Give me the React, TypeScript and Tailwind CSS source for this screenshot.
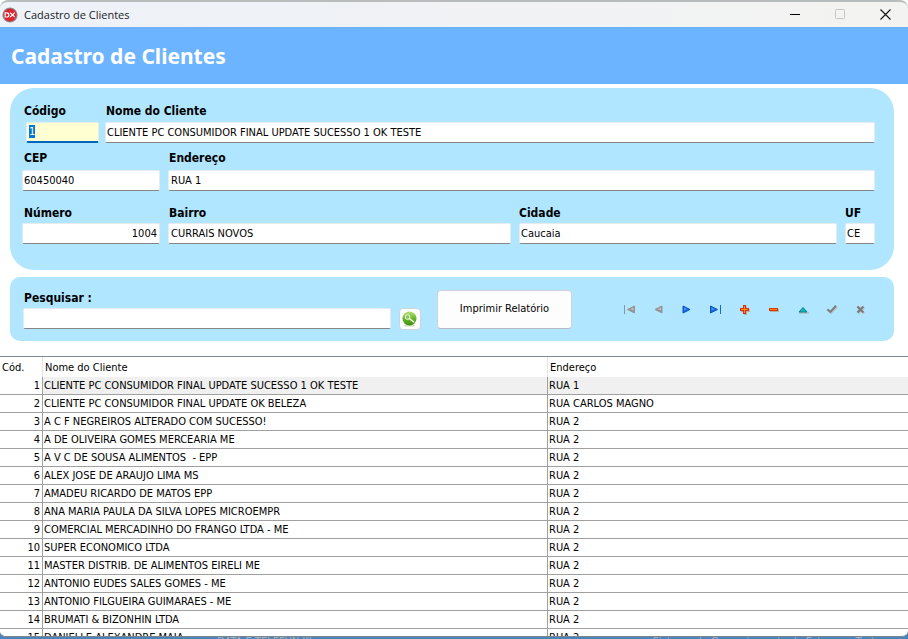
import { useEffect, useRef, type ReactNode, type Ref } from 'react';

const clients: { code: number; name: string; address: string }[] = [
  { code: 1, name: 'CLIENTE PC CONSUMIDOR FINAL UPDATE SUCESSO 1 OK TESTE', address: 'RUA 1' },
  { code: 2, name: 'CLIENTE PC CONSUMIDOR FINAL UPDATE OK BELEZA', address: 'RUA CARLOS MAGNO' },
  { code: 3, name: 'A C F NEGREIROS ALTERADO COM SUCESSO!', address: 'RUA 2' },
  { code: 4, name: 'A DE OLIVEIRA GOMES MERCEARIA ME', address: 'RUA 2' },
  { code: 5, name: 'A V C DE SOUSA ALIMENTOS  - EPP', address: 'RUA 2' },
  { code: 6, name: 'ALEX JOSE DE ARAUJO LIMA MS', address: 'RUA 2' },
  { code: 7, name: 'AMADEU RICARDO DE MATOS EPP', address: 'RUA 2' },
  { code: 8, name: 'ANA MARIA PAULA DA SILVA LOPES MICROEMPR', address: 'RUA 2' },
  { code: 9, name: 'COMERCIAL MERCADINHO DO FRANGO LTDA - ME', address: 'RUA 2' },
  { code: 10, name: 'SUPER ECONOMICO LTDA', address: 'RUA 2' },
  { code: 11, name: 'MASTER DISTRIB. DE ALIMENTOS EIRELI ME', address: 'RUA 2' },
  { code: 12, name: 'ANTONIO EUDES SALES GOMES - ME', address: 'RUA 2' },
  { code: 13, name: 'ANTONIO FILGUEIRA GUIMARAES - ME', address: 'RUA 2' },
  { code: 14, name: 'BRUMATI & BIZONHIN LTDA', address: 'RUA 2' },
  { code: 15, name: 'DANIELLE ALEXANDRE MAIA', address: 'RUA 2' },
];

const inputBase =
  'h-[21px] min-w-0 rounded-[2px] border border-[#e6ebee] px-px pb-px text-[11px] leading-[14px] text-black outline-none selection:bg-[#0078d7] selection:text-white';

function Field({
  id,
  label,
  value,
  className = '',
  labelClass = '',
  inputClass = 'bg-white border-b-[#868686]',
  inputRef,
}: {
  id: string;
  label: string;
  value: string;
  className?: string;
  labelClass?: string;
  inputClass?: string;
  inputRef?: Ref<HTMLInputElement>;
}) {
  return (
    <div className={`flex min-w-0 flex-col ${className}`}>
      <label htmlFor={id} className={`text-[12px] font-bold leading-4 ${labelClass}`}>
        {label}
      </label>
      <input ref={inputRef} id={id} type="text" defaultValue={value} className={`${inputBase} ${inputClass}`} />
    </div>
  );
}

function Triangle({ flip, bar, blue }: { flip?: boolean; bar?: boolean; blue?: boolean }) {
  const main = blue ? '#1668e0' : '#949494';
  const edge = blue ? '#0a52c8' : '#949494';
  const light = blue ? '#4c96f4' : '#c4c4c4';
  return (
    <g transform={flip ? 'translate(14 0) scale(-1 1)' : undefined}>
      <path d={bar ? 'M1.5 3v7L8.5 6.5z' : 'M3 3v7L10 6.5z'} fill={main} stroke={edge} strokeWidth="1" />
      <path d={bar ? 'M2.5 4.6v2.6L5.8 6.2z' : 'M4 4.6v2.6L7.3 6.2z'} fill={light} />
      {bar && <path d="M11 2h1v9h-1z" fill={main} />}
    </g>
  );
}

const navItems: { label: string; icon: ReactNode }[] = [
  { label: 'Primeiro', icon: <Triangle flip bar /> },
  { label: 'Anterior', icon: <Triangle flip /> },
  { label: 'Próximo', icon: <Triangle blue /> },
  { label: 'Último', icon: <Triangle bar blue /> },
  {
    label: 'Inserir',
    icon: (
      <>
        <path d="M6 3h3v3h3v3H9v3H6V9H3V6h3z" fill="#b4b0a8" />
        <path d="M5 2h3v3h3v3H8v3H5V8H2V5h3z" fill="#d83208" />
        <path d="M6 3h1v3h3v1H7v3H6V7H3V6h3z" fill="#ff8a1c" />
      </>
    ),
  },
  {
    label: 'Excluir',
    icon: (
      <>
        <path d="M3 6h9v3H3z" fill="#b4b0a8" />
        <path d="M2 5h9v3H2z" fill="#d83a08" />
        <path d="M3 6h7v1H3z" fill="#ff7a14" />
      </>
    ),
  },
  {
    label: 'Editar',
    icon: (
      <>
        <path d="M3 9.4h10v1.2H3z" fill="#b4b0a8" />
        <path d="M7 4.5L11 9H3z" fill="#12b8c0" stroke="#087c88" strokeWidth="1" />
      </>
    ),
  },
  {
    label: 'Gravar',
    icon: (
      <>
        <path d="M3 7.4L6 10l6-6" fill="none" stroke="#bfbfbf" strokeWidth="2" />
        <path d="M2.4 6.2L5.4 8.9L11 2.8" fill="none" stroke="#7c7c7c" strokeWidth="2" />
      </>
    ),
  },
  {
    label: 'Cancelar',
    icon: (
      <>
        <path d="M4.2 4.2l6 6.2M10.2 4.2l-6 6.2" stroke="#c4c0bc" strokeWidth="2.2" />
        <path d="M3.4 3.4l6 6.2M9.4 3.4l-6 6.2" stroke="#7c7c7c" strokeWidth="2.2" />
      </>
    ),
  },
];

function TitleBar() {
  return (
    <header className="flex h-[27px] shrink-0 items-stretch justify-between rounded-t-lg border-t-2 border-[#b9bcbc] bg-linear-to-r from-[#eef2f9] to-[#f3f3f1]">
      <div className="flex items-center gap-[6px] pl-[2px]">
        <svg width="16" height="16" viewBox="0 0 16 16" aria-hidden="true">
          <circle cx="8" cy="8" r="7.6" fill="#8f8f94" />
          <circle cx="8" cy="8" r="6.5" fill="#dc2632" />
          <path
            d="M3.2 5.8h1.6a2 2 0 010 4.2H3.2zM8.2 5.6l4.6 4.6M12.8 5.6l-4.6 4.6"
            fill="none"
            stroke="#fff"
            strokeWidth="1.2"
          />
        </svg>
        <span className="font-['Open_Sans',sans-serif] text-[11px] leading-4 text-[#1b1b1b]">Cadastro de Clientes</span>
      </div>
      <div className="flex">
        <button type="button" aria-label="Minimizar" className="grid w-[45px] place-items-center">
          <svg width="11" height="11" viewBox="0 0 11 11">
            <path d="M0 5.5h10" stroke="#000" />
          </svg>
        </button>
        <button type="button" aria-label="Maximizar" disabled className="grid w-[45px] place-items-center">
          <svg width="11" height="11" viewBox="0 0 11 11">
            <rect x=".5" y=".5" width="9" height="9" rx="1" fill="none" stroke="#c6c6c6" />
          </svg>
        </button>
        <button type="button" aria-label="Fechar" className="grid w-[45px] place-items-center">
          <svg width="11" height="11" viewBox="0 0 11 11">
            <path d="M.5 .5l10 10M10.5 .5l-10 10" stroke="#111" strokeWidth="1.1" />
          </svg>
        </button>
      </div>
    </header>
  );
}

export default function App() {
  const codeRef = useRef<HTMLInputElement>(null);

  useEffect(() => {
    codeRef.current?.focus();
    codeRef.current?.select();
  }, []);

  return (
    <div className="flex h-screen flex-col overflow-hidden bg-[#4a84b8] font-['DejaVu_Sans_Condensed','DejaVu_Sans',sans-serif] text-[11px] text-black">
      <div className="flex min-h-0 flex-1 flex-col overflow-hidden rounded-b-md border-b border-[#7d8790] bg-white">
        <TitleBar />
        <div className="flex h-[57px] shrink-0 items-center bg-[#6cb4ff] px-[11px]">
          <h1 className="font-['Noto_Sans',sans-serif] text-[21px] font-bold leading-7 text-white">Cadastro de Clientes</h1>
        </div>

        <form className="mr-[14px] ml-[10px] mt-1 flex shrink-0 flex-col rounded-[24px] bg-[#b0e6ff] pt-[15px] pr-[19px] pb-[26px] pl-3">
          <div className="flex gap-[6px]">
            <Field
              id="codigo"
              label="Código"
              value="1"
              className="w-[77px] gap-[3px]"
              labelClass="pl-[2px]"
              inputClass="ml-1 border-b-2 border-b-[#0067c0] bg-[#ffffd2] pl-[2px]"
              inputRef={codeRef}
            />
            <Field
              id="nome"
              label="Nome do Cliente"
              value="CLIENTE PC CONSUMIDOR FINAL UPDATE SUCESSO 1 OK TESTE"
              className="flex-1 gap-[3px]"
              labelClass="pl-px"
            />
          </div>
          <div className="mt-[7px] flex gap-2">
            <Field id="cep" label="CEP" value="60450040" className="w-[138px] gap-1" labelClass="pl-[2px]" />
            <Field
              id="endereco"
              label="Endereço"
              value="RUA 1"
              className="flex-1 gap-1"
              labelClass="pl-px"
              inputClass="border-b-[#868686] bg-white pl-[2px]"
            />
          </div>
          <div className="mt-[14px] grid grid-cols-[138px_343fr_318fr_30px] gap-2">
            <Field
              id="numero"
              label="Número"
              value="1004"
              className="gap-[2px]"
              labelClass="pl-[2px]"
              inputClass="border-b-[#868686] bg-white pr-[2px] text-right"
            />
            <Field
              id="bairro"
              label="Bairro"
              value="CURRAIS NOVOS"
              className="gap-[2px]"
              labelClass="pl-px"
              inputClass="border-b-[#868686] bg-white pl-[2px]"
            />
            <Field id="cidade" label="Cidade" value="Caucaia" className="gap-[2px]" />
            <Field id="uf" label="UF" value="CE" className="gap-[2px]" />
          </div>
        </form>

        <section className="mr-[14px] ml-[10px] mt-[7px] flex h-16 shrink-0 items-center rounded-[10px] bg-[#b0e6ff] pt-px pr-[19px] pl-[13px]">
          <div className="flex flex-1 flex-col gap-[2px]">
            <label htmlFor="pesquisar" className="pl-px text-[12px] font-bold leading-4">
              Pesquisar :
            </label>
            <div className="flex items-center gap-2">
              <input id="pesquisar" type="text" className={`${inputBase} flex-1 border-b-[#868686] bg-white`} />
              <button
                type="button"
                aria-label="Pesquisar"
                className="grid size-[22px] place-items-center rounded border border-[#cfd4d8] bg-[#fdfdfd]"
              >
                <svg width="16" height="16" viewBox="0 0 16 16">
                  <defs>
                    <linearGradient id="ball" x1="0" y1="0" x2="0" y2="1">
                      <stop offset="0" stopColor="#b5e07a" />
                      <stop offset=".5" stopColor="#6cb52c" />
                      <stop offset="1" stopColor="#3f8f10" />
                    </linearGradient>
                  </defs>
                  <ellipse cx="7.5" cy="14.4" rx="5.5" ry="1.2" fill="#d0dfc0" />
                  <circle cx="7.5" cy="7.5" r="7" fill="url(#ball)" />
                  <circle cx="5.6" cy="6" r="2.4" fill="#8cc854" stroke="#f0f8e6" strokeWidth="1" />
                  <path d="M7.5 7.6l4.4 3.4" stroke="#f0f8e6" strokeWidth="1.5" strokeLinecap="round" />
                </svg>
              </button>
            </div>
          </div>
          <button
            type="button"
            className="ml-4 h-[39px] w-[135px] rounded border border-[#cdd3d8] border-b-[#b8bcc0] bg-[#fdfdfd] text-[11px]"
          >
            Imprimir Relatório
          </button>
          <div role="toolbar" aria-label="Navegação" className="ml-[43px] grid w-[260px] grid-cols-9">
            {navItems.map((item) => (
              <button key={item.label} type="button" aria-label={item.label} className="grid h-6 place-items-center">
                <svg width="14" height="13" viewBox="0 0 14 13">
                  {item.icon}
                </svg>
              </button>
            ))}
          </div>
        </section>

        <div className="mt-[15px] min-h-0 flex-1 overflow-hidden border-t border-[#828790]">
          <table className="w-full table-fixed border-separate border-spacing-0 text-left leading-[17px]">
            <colgroup>
              <col className="w-[43px]" />
              <col className="w-[505px]" />
              <col />
            </colgroup>
            <thead>
              <tr className="h-5">
                <th className="border-r border-[#e5e5e5] p-0 pl-[2px] font-normal">Cód.</th>
                <th className="border-r border-[#e5e5e5] p-0 pl-[2px] font-normal">Nome do Cliente</th>
                <th className="p-0 pl-[2px] font-normal">Endereço</th>
              </tr>
            </thead>
            <tbody>
              {clients.map((c) => (
                <tr key={c.code} className="first:bg-[#f0f0f0]">
                  <td className="border-r border-b border-[#a0a0a0] bg-white p-0 pr-[2px] text-right">{c.code}</td>
                  <td className="border-r border-b border-[#a0a0a0] p-0 pl-px whitespace-pre">{c.name}</td>
                  <td className="border-b border-[#a0a0a0] p-0 pl-px">{c.address}</td>
                </tr>
              ))}
            </tbody>
          </table>
        </div>
      </div>

      <footer className="flex h-[2px] shrink-0 justify-between overflow-hidden pr-[27px] pl-[217px] text-[11px] leading-[9px] text-[#a9b4bd]">
        <span>DATA E TELEFUN KI</span>
        <span>Sistema de Gerenciamento de Estoque - Teste</span>
      </footer>
    </div>
  );
}
